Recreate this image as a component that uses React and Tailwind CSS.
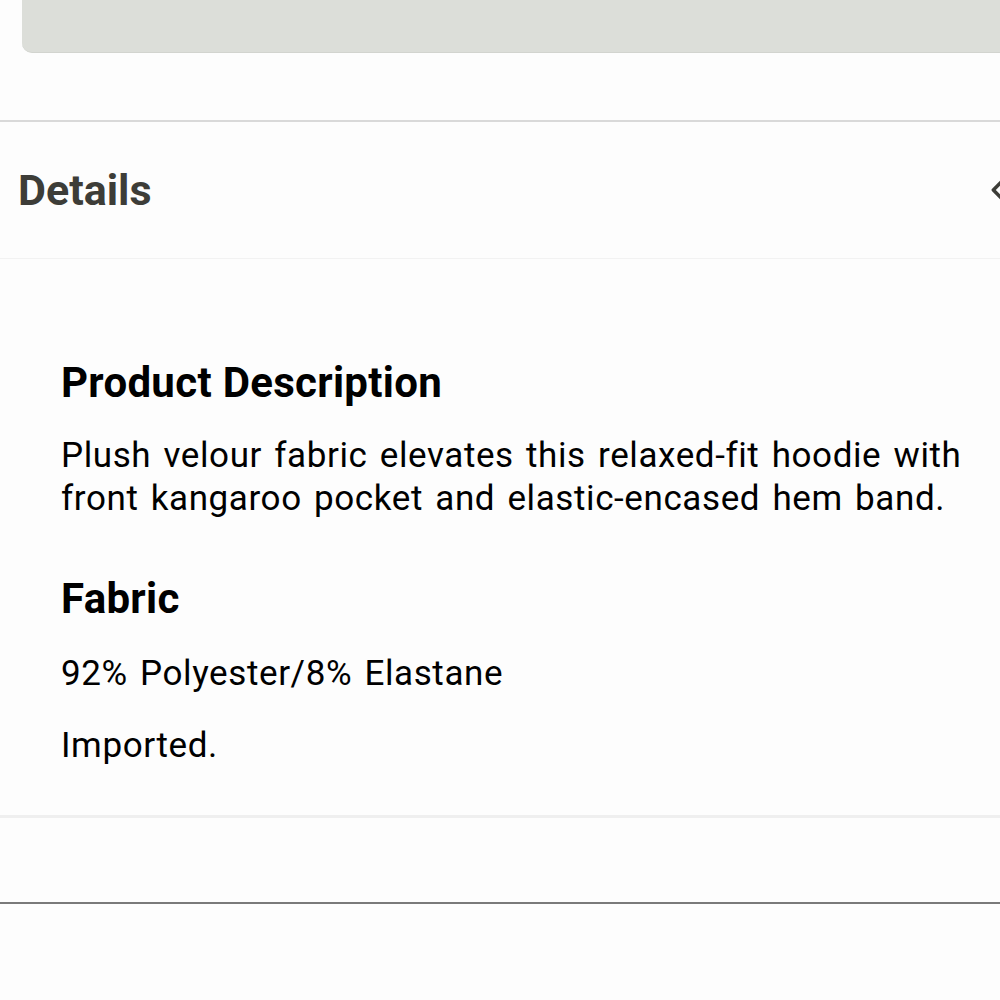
export default function App() {
  return (
    <div className="w-[1000px] h-[1000px] overflow-hidden bg-[#fdfdfd] font-['Roboto',sans-serif]">
      <div className="ml-[22px] h-[53px] bg-[#dcded9] rounded-bl-[10px] border-b border-[#d2d4cf]" />
      <div className="mt-[67px] border-t-2 border-[#d9d9d9]">
        <div className="flex items-center justify-between h-[137px] pl-[18px] w-[1020px] border-b border-[#f2f2f2]">
          <h2 className="text-[43px] font-bold text-[#3d3d38]">Details</h2>
          <svg width="28" height="28" viewBox="0 0 24 24" className="mr-[8px]" fill="none" stroke="#3d3d38" strokeWidth="3" strokeLinecap="round" strokeLinejoin="round">
            <path d="M15 5l-7 7 7 7" />
          </svg>
        </div>
        <div className="pl-[61px] pr-[20px] pt-[100px] pb-[48px] text-black">
          <h3 className="text-[42px] leading-[48px] font-bold tracking-[0.3px]">Product Description</h3>
          <p className="mt-[27px] text-[35px] leading-[43px] tracking-[0.6px] [word-spacing:3px]">
            Plush velour fabric elevates this relaxed-fit hoodie with front kangaroo pocket and elastic-encased hem band.
          </p>
          <h3 className="mt-[55px] text-[42px] leading-[48px] font-bold tracking-[0.3px]">Fabric</h3>
          <p className="mt-[29px] text-[35px] leading-[43px] tracking-[0.6px] [word-spacing:3px]">92% Polyester/8% Elastane</p>
          <p className="mt-[29px] text-[35px] leading-[43px] tracking-[0.6px] [word-spacing:3px]">Imported.</p>
        </div>
        <div className="border-t-[3px] border-[#efefef] h-[87px]" />
        <div className="border-t-2 border-[#7a7a7a]" />
      </div>
    </div>
  )
}
